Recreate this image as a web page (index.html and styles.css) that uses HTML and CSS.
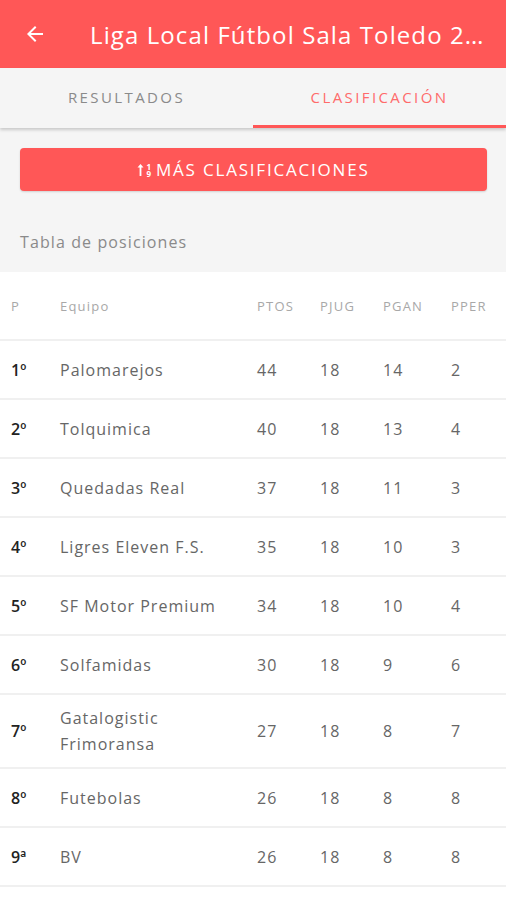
FILE: index.html
```html
<!DOCTYPE html>
<html lang="es">
<head>
  <meta charset="UTF-8" />
  <meta name="viewport" content="width=device-width, initial-scale=1.0" />
  <title>Clasificación</title>
  <link rel="stylesheet" href="styles.css">
</head>
<body>

<header class="appbar">
  <a href="#" class="back" aria-label="Volver">
    <svg width="24" height="24" viewBox="0 0 24 24"><path d="M20 11H7.83l5.59-5.59L12 4l-8 8 8 8 1.41-1.41L7.83 13H20v-2z" fill="#fff"/></svg>
  </a>
  <h1>Liga Local Fútbol Sala Toledo 2023-2024</h1>
</header>

<nav class="tabs">
  <a href="#" class="tab">RESULTADOS</a>
  <a href="#" class="tab active">CLASIFICACIÓN</a>
</nav>

<div class="content">
  <button type="button" class="more">
    <span class="sort-icon">
      <svg width="7" height="14" viewBox="0 0 7 14"><path d="M3.5 1 L6.5 4.5 H4.4 V13 H2.6 V4.5 H0.5 Z" fill="#fff"/></svg>
      <span class="digits"><span>1</span><span>9</span></span>
    </span>
    <span>MÁS CLASIFICACIONES</span>
  </button>
  <p class="caption">Tabla de posiciones</p>
</div>

<table class="standings">
  <colgroup>
    <col class="c-pos"><col class="c-team"><col class="c-num"><col class="c-num"><col class="c-win"><col>
  </colgroup>
  <thead>
    <tr><th>P</th><th>Equipo</th><th>PTOS</th><th>PJUG</th><th>PGAN</th><th>PPER</th></tr>
  </thead>
  <tbody>
    <tr><td>1º</td><td>Palomarejos</td><td>44</td><td>18</td><td>14</td><td>2</td></tr>
    <tr><td>2º</td><td>Tolquimica</td><td>40</td><td>18</td><td>13</td><td>4</td></tr>
    <tr><td>3º</td><td>Quedadas Real</td><td>37</td><td>18</td><td>11</td><td>3</td></tr>
    <tr><td>4º</td><td>Ligres Eleven F.S.</td><td>35</td><td>18</td><td>10</td><td>3</td></tr>
    <tr><td>5º</td><td>SF Motor Premium</td><td>34</td><td>18</td><td>10</td><td>4</td></tr>
    <tr><td>6º</td><td>Solfamidas</td><td>30</td><td>18</td><td>9</td><td>6</td></tr>
    <tr class="tall"><td>7º</td><td>Gatalogistic<br>Frimoransa</td><td>27</td><td>18</td><td>8</td><td>7</td></tr>
    <tr><td>8º</td><td>Futebolas</td><td>26</td><td>18</td><td>8</td><td>8</td></tr>
    <tr><td>9ª</td><td>BV</td><td>26</td><td>18</td><td>8</td><td>8</td></tr>
    <tr class="end"><td colspan="6"></td></tr>
  </tbody>
</table>

</body>
</html>
```

FILE: styles.css
```css
body {
  margin: 0;
  padding: 0;
  background: #f5f5f5;
  font-family: 'Open Sans', 'DejaVu Sans', sans-serif;
  color: #555;
  overflow: hidden;
}
.appbar {
  height: 68px;
  background: #ff5757;
  display: flex;
  align-items: center;
  padding: 0 20px 0 23px;
}
.back {
  display: flex;
  width: 24px;
  height: 24px;
  margin-right: 43px;
}
.appbar h1 {
  margin: 0;
  flex: 1;
  min-width: 0;
  color: #fff;
  font-size: 24px;
  font-weight: 400;
  white-space: nowrap;
  overflow: hidden;
  text-overflow: ellipsis;
  letter-spacing: 1.1px;
}
.tabs {
  display: flex;
  height: 60px;
  background: #f5f5f5;
  box-shadow: 0 2px 3px rgba(0,0,0,0.18);
  position: relative;
}
.tab {
  flex: 1;
  display: flex;
  align-items: center;
  justify-content: center;
  text-decoration: none;
  color: #8a8a8a;
  font-size: 15px;
  letter-spacing: 2.4px;
  border-bottom: 3px solid transparent;
}
.tab.active {
  color: #ff6b6b;
  border-bottom-color: #ff5757;
}
.content {
  padding: 20px 19px 0 20px;
}
.more {
  width: 100%;
  height: 43px;
  border: none;
  border-radius: 4px;
  background: #ff5757;
  color: #fff;
  font-family: inherit;
  font-size: 17px;
  letter-spacing: 1.8px;
  display: flex;
  align-items: center;
  justify-content: center;
  gap: 5px;
  padding: 0;
  box-shadow: 0 1px 2px rgba(0,0,0,0.15);
}
.sort-icon {
  display: flex;
  align-items: center;
  gap: 2px;
  letter-spacing: 0;
}
.digits {
  display: flex;
  flex-direction: column;
  font-size: 8px;
  font-weight: 700;
  line-height: 7px;
}
.caption {
  margin: 0;
  padding: 40px 0 20px;
  height: 21px;
  color: #8a8a8a;
  font-size: 16px;
  letter-spacing: 1.1px;
}
.standings {
  width: 100%;
  table-layout: fixed;
  border-collapse: collapse;
  background: #fff;
}
.c-pos { width: 60px; }
.c-team { width: 197px; }
.c-num { width: 63px; }
.c-win { width: 68px; }
.standings th {
  height: 67px;
  padding: 0;
  text-align: left;
  font-weight: 400;
  font-size: 13px;
  color: #a8a8a8;
  letter-spacing: 1.2px;
}
.standings td {
  height: 57px;
  padding: 0;
  font-size: 16px;
  color: #666;
  border-top: 2px solid #f0f0f0;
  line-height: 26px;
  letter-spacing: 1px;
}
.standings tr.tall td {
  height: 72px;
}
.standings th:first-child,
.standings td:first-child {
  padding-left: 11px;
}
.standings td:first-child {
  color: #222;
  font-weight: 600;
  letter-spacing: 0;
}
.standings tr.end td {
  height: 20px;
  padding: 0;
}
```
